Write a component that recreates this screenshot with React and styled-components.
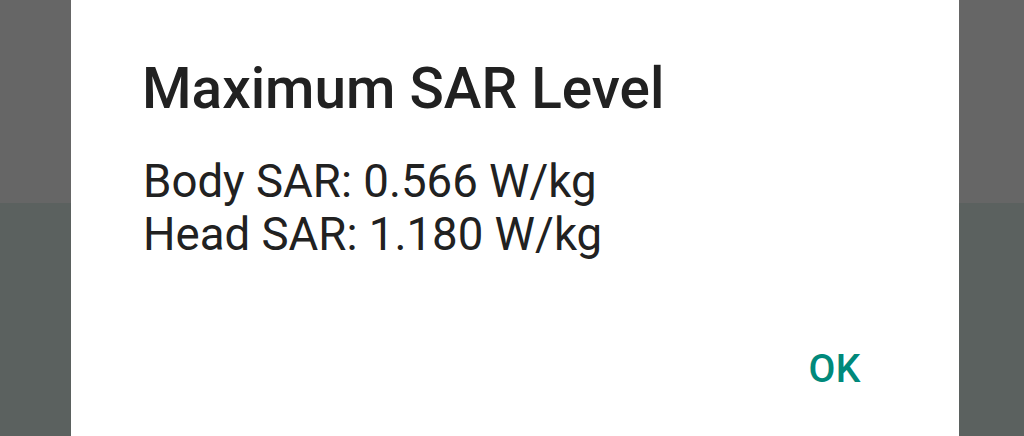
import React from "react";
import styled, { createGlobalStyle } from "styled-components";

const Global = createGlobalStyle`
  html, body { margin: 0; padding: 0; }
  body { font-family: Roboto, "Noto Sans", sans-serif; }
`;

const Backdrop = styled.div`
  width: 1024px;
  height: 436px;
  overflow: hidden;
  display: flex;
  justify-content: flex-start;
  background: linear-gradient(to bottom, #666666 0, #666666 203px, #5b615f 203px, #5b615f 100%);
`;

const Dialog = styled.div`
  margin-left: 71px;
  width: 888px;
  height: 100%;
  background: #ffffff;
  box-sizing: border-box;
  padding: 57px 72px 0 71px;
  display: flex;
  flex-direction: column;
`;

const Title = styled.h2`
  margin: 0;
  font-family: Roboto, sans-serif;
  font-weight: 500;
  font-size: 56.7px;
  line-height: 64px;
  color: #212121;
`;

const Message = styled.div`
  margin-top: 34px;
  padding-left: 1px;
  font-family: Roboto, sans-serif;
  font-weight: 400;
  font-size: 45.6px;
  line-height: 53px;
  color: #212121;
`;

const Actions = styled.div`
  margin-top: auto;
  margin-bottom: 43px;
  display: flex;
  justify-content: flex-end;
`;

const TextButton = styled.button`
  border: none;
  background: transparent;
  padding: 0;
  margin-right: 26px;
  font-family: Roboto, sans-serif;
  font-weight: 500;
  font-size: 39px;
  line-height: 48px;
  color: ${(p) => p.$color || "#00897b"};
  letter-spacing: 0.5px;
`;

export default function App() {
  return (
    <>
      <Global />
      <Backdrop>
        <Dialog>
          <Title>Maximum SAR Level</Title>
          <Message>
            <div>Body SAR: 0.566 W/kg</div>
            <div>Head SAR: 1.180 W/kg</div>
          </Message>
          <Actions>
            <TextButton>OK</TextButton>
          </Actions>
        </Dialog>
      </Backdrop>
    </>
  );
}
